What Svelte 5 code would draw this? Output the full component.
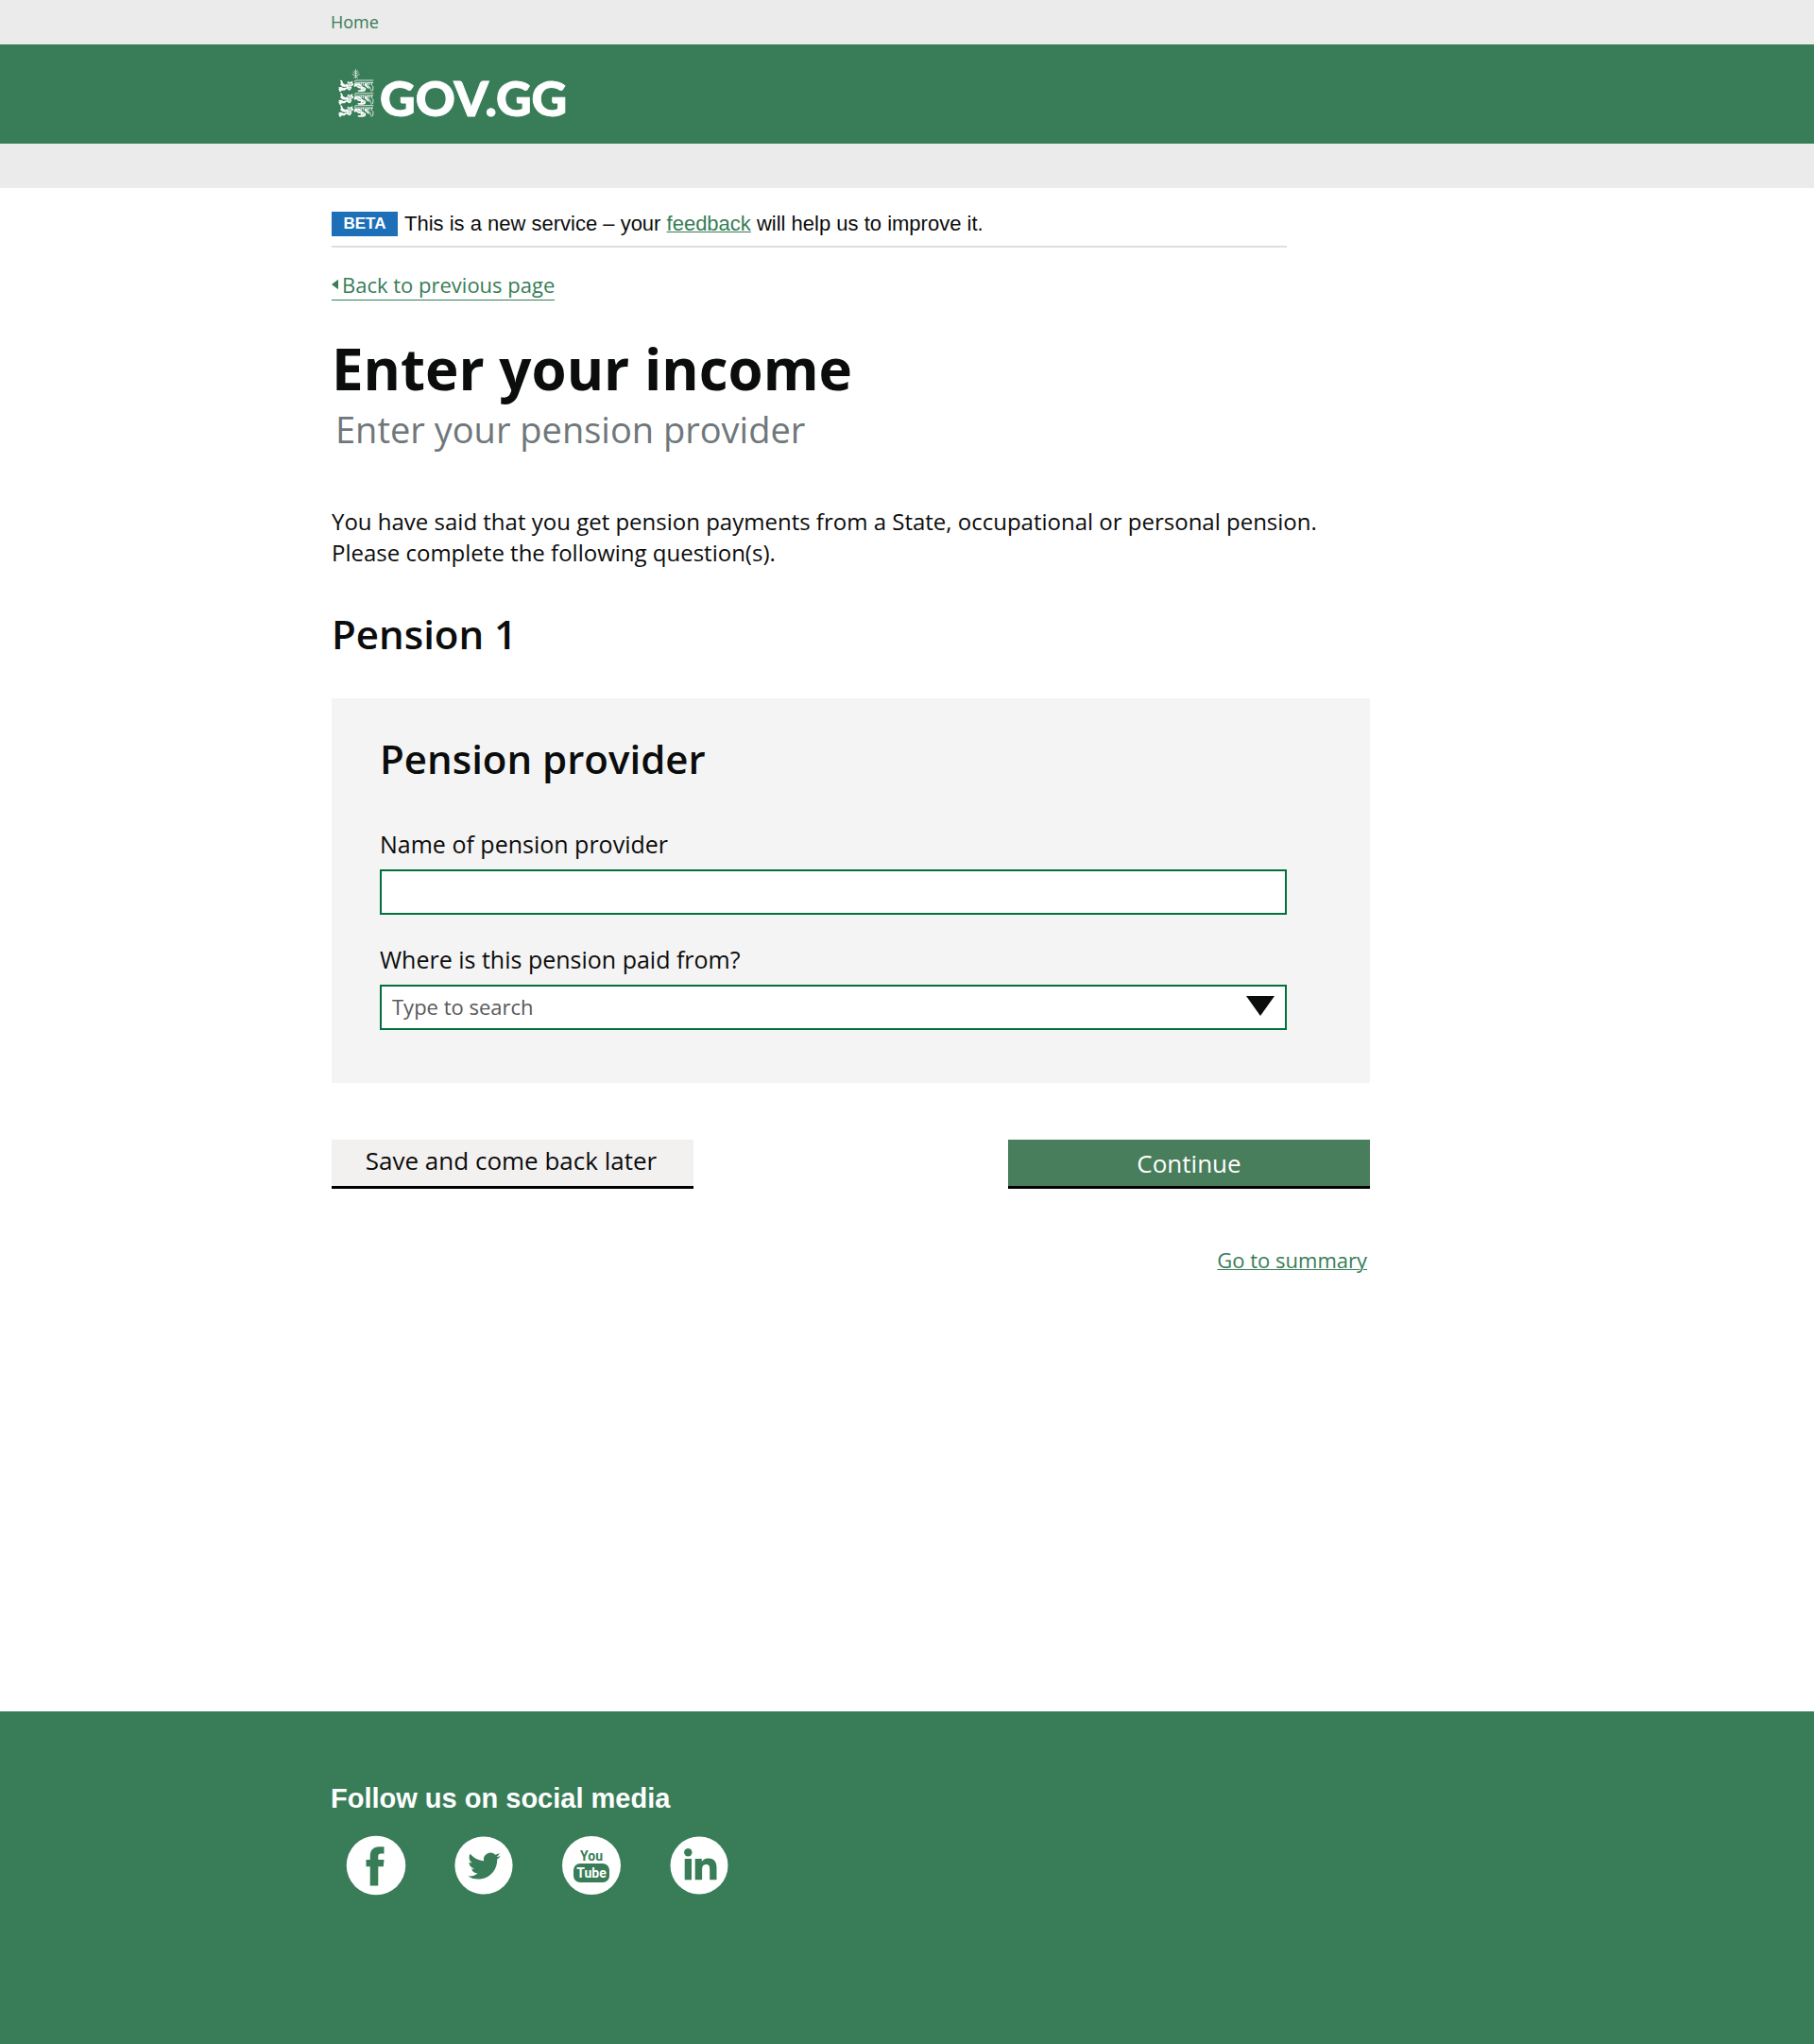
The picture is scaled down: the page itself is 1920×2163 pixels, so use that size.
<script>
  let provider = $state('');
  let country = $state('');
  const lionRows = [34, 75, 114];
</script>

<div class="page">
  <nav class="topbar" aria-label="Breadcrumb">
    <div class="container"><a href="#home">Home</a></div>
  </nav>

  <header class="masthead">
    <div class="container">
      <a class="brand" href="#home" aria-label="GOV.GG">
        <svg class="crest" viewBox="0 0 114 153" aria-hidden="true">
          <g fill="none" stroke="#fff" stroke-width="2" stroke-linecap="round">
            <path d="M56 1v28M56 10l-5-4M56 10l5-4M56 16l-8-6M56 16l8-6M56 22l-11-5M56 22l11-5M50 28l6-5 6 5" />
          </g>
          {#each lionRows as y}
            <g transform="translate(0 {y})">
              <path fill="#fff" d="M6 1l6 1 3 9 8 5 6-4 0 5-6 6-10-1-7-7 3-4zM1 24l8-1 8 4 10-3 1 4-8 6-9 0-3 4-6-1 2-4-5-2 4-2zM30 5l7 3 9-4-1 6 4 4-3 5-5 1 2 6-5 7-5 1-4-5-3 0 2-4-3-4 4-5 3-2-3-4z" />
              <path fill="none" stroke="#387d57" stroke-width="1.3" d="M31 11l12 2M30 16l14 1M31 21l9 1M32 27l7 0" />
              <path fill="none" stroke="#fff" stroke-width="2.4" stroke-linejoin="round" d="M112 2H55l-3 4 3 3h55l-3 0-1 8 5 5-1 12-6 3M56 9l-5 5M74 9v12l7 5M80 9v10M95 9l-2 9 9 7 1 9M100 9l-1 8" />
              <path fill="#fff" d="M54 12l16 0 3 9 7 2 8 4-2 9-8 2-14 0-3-4 10-1 1-5-9-2-5-5-7 2-1-5zM84 12l8 0-1 7 7 5-1 6-9-8-4-3z" />
              <path fill="none" stroke="#387d57" stroke-width="1.500" d="M60 17l12 6M74 33l9-5" />
            </g>
          {/each}
        </svg>
        <span class="wordmark">GOV.GG</span>
      </a>
    </div>
  </header>
  <div class="subbar"></div>

  <main class="container">
    <div class="column">
      <div class="phase">
        <strong class="tag">BETA</strong>
        <span>This is a new service – your <a href="#feedback">feedback</a> will help us to improve it.</span>
      </div>

      <a class="back" href="#previous">
        <svg viewBox="0 0 8 12" aria-hidden="true"><path d="M8 0v12L0 6z" fill="currentColor" /></svg>Back to previous page
      </a>

      <h1>Enter your income</h1>
      <p class="caption">Enter your pension provider</p>

      <p class="intro">
        You have said that you get pension payments from a State, occupational or personal pension. Please complete the
        following question(s).
      </p>

      <h2>Pension 1</h2>

      <form onsubmit={(e) => e.preventDefault()}>
        <section class="panel">
          <h2>Pension provider</h2>
          <label for="provider">Name of pension provider</label>
          <div class="field"><input id="provider" type="text" bind:value={provider} /></div>
          <label for="country">Where is this pension paid from?</label>
          <div class="field">
            <input id="country" type="text" placeholder="Type to search" bind:value={country} />
            <button class="toggle" type="button" aria-label="Show options">
              <svg viewBox="0 0 30 21" aria-hidden="true"><path d="M0 0h30L15 21z" fill="#0b0c0c" /></svg>
            </button>
          </div>
        </section>

        <div class="actions">
          <button class="btn secondary" type="button">Save and come back later</button>
          <button class="btn primary" type="submit">Continue</button>
        </div>
      </form>

      <div class="summary"><a href="#summary">Go to summary</a></div>
    </div>
  </main>

  <footer>
    <div class="container">
      <h3>Follow us on social media</h3>
      <ul>
        <li>
          <a href="#facebook" aria-label="Facebook">
            <svg viewBox="0 0 64 64"><circle cx="32" cy="32" r="31.300" fill="#fff" />
              <path fill="#387d57" d="M25.700 53.500V33.300H21.500V26H25.700V22.500C25.700 16 29 12.300 35.300 12.300H40.500V19.500H37.300C35 19.500 34.300 20.600 34.300 22.800V26H40.500L39.800 33.300H34.300V53.500Z" />
            </svg>
          </a>
        </li>
        <li>
          <a href="#twitter" aria-label="Twitter">
            <svg viewBox="0 0 64 64"><circle cx="32" cy="32" r="30.600" fill="#fff" />
              <path fill="#387d57" transform="translate(15.200 15.300) scale(1.440)" d="M23.950 4.570a10 10 0 0 1-2.820.780 4.960 4.960 0 0 0 2.160-2.730c-.950.560-2 .960-3.130 1.190a4.920 4.920 0 0 0-8.380 4.480C7.690 8.100 4.070 6.130 1.640 3.160a4.820 4.820 0 0 0-.670 2.480c0 1.710.870 3.210 2.190 4.100a4.900 4.900 0 0 1-2.230-.620v.060a4.920 4.920 0 0 0 3.950 4.830 5 5 0 0 1-2.210.080 4.940 4.940 0 0 0 4.600 3.420A9.870 9.870 0 0 1 0 19.540a14 14 0 0 0 7.550 2.210c9.050 0 14-7.500 14-13.980 0-.210 0-.420-.020-.630a9.940 9.940 0 0 0 2.460-2.550z" />
            </svg>
          </a>
        </li>
        <li>
          <a href="#youtube" aria-label="YouTube">
            <svg viewBox="0 0 64 64"><circle cx="32" cy="32" r="31" fill="#fff" />
              <rect x="13" y="30" width="38" height="20" rx="7" fill="#387d57" />
              <text x="32" y="27" class="yt" fill="#387d57">You</text>
              <text x="32" y="45" class="yt" fill="#fff">Tube</text>
            </svg>
          </a>
        </li>
        <li>
          <a href="#linkedin" aria-label="LinkedIn">
            <svg viewBox="0 0 64 64"><circle cx="32" cy="32" r="30.500" fill="#fff" />
              <g fill="#387d57"><circle cx="20.300" cy="18.300" r="4.200" /><rect x="16.700" y="25" width="7.300" height="22.300" />
                <path d="M27.700 25H34.800V28C36 25.900 38.300 24.400 41.500 24.400C48.600 24.400 50.500 28.800 50.500 35V47.300H43.200V36.300C43.200 33 42.700 30.900 39.600 30.900C36.200 30.900 35.100 33.100 35.100 36.300V47.300H27.700Z" /></g>
            </svg>
          </a>
        </li>
      </ul>
    </div>
  </footer>
</div>

<style>
  :global(body) {
    background: #fff;
  }
  .page {
    display: flex;
    flex-direction: column;
    min-height: 100vh;
    font-family: 'Open Sans', sans-serif;
    color: #0b0c0c;
  }
  .container {
    box-sizing: border-box;
    width: 100%;
    max-width: 1218px;
    margin: 0 auto;
  }
  .topbar .container,
  footer .container {
    max-width: 1220px;
  }
  .column {
    max-width: 1099px;
  }
  a {
    color: #387d57;
    text-decoration-thickness: 1px;
  }
  h1,
  h2,
  h3,
  p,
  ul {
    margin: 0;
    padding: 0;
  }
  .topbar,
  .subbar {
    height: 47px;
    background: #ebebeb;
    font-size: 18px;
    line-height: 47px;
  }
  .topbar a {
    text-decoration: none;
  }
  .masthead {
    display: flex;
    height: 105px;
    background: #387d57;
  }
  .brand {
    box-sizing: border-box;
    display: inline-flex;
    align-items: center;
    gap: 6px;
    height: 105px;
    padding: 6px 0 0 7px;
    color: #fff;
    text-decoration: none;
  }
  .crest {
    width: 38px;
    height: 51px;
    margin-bottom: 8px;
  }
  .wordmark {
    font: 900 52px/60px Lato, sans-serif;
    -webkit-text-stroke: 1px #fff;
  }
  main {
    flex: 1;
    padding: 25px 0 60px;
  }
  .phase {
    display: flex;
    gap: 7px;
    max-width: 1011px;
    padding-bottom: 10px;
    border-bottom: 2px solid #dedede;
    font: 22px/26px 'Liberation Sans', sans-serif;
  }
  .tag {
    box-sizing: border-box;
    width: 70px;
    background: #1d70b8;
    color: #fff;
    font-size: 17px;
    text-align: center;
  }
  .back {
    display: inline-flex;
    align-items: center;
    gap: 4px;
    margin-top: 24px;
    padding-bottom: 1px;
    border-bottom: 1px solid #387d57;
    font-size: 22px;
    line-height: 30px;
    text-decoration: none;
  }
  .back svg {
    width: 7px;
    height: 12px;
  }
  h1 {
    margin-top: 40px;
    font-size: 60px;
    line-height: 64px;
  }
  .caption {
    padding-left: 4px;
    color: #6f777b;
    font-size: 38px;
    line-height: 64px;
  }
  .intro {
    margin: 49px 0 46px;
    font-size: 24px;
    line-height: 33px;
  }
  h2 {
    font-size: 42px;
    font-weight: 600;
    line-height: 48px;
  }
  .panel {
    margin-top: 44px;
    padding: 40px 88px 56px 51px;
    background: #f4f4f4;
  }
  .panel h2 {
    margin-bottom: 50px;
  }
  label {
    display: block;
    margin-bottom: 11px;
    font-size: 25px;
    line-height: 32px;
  }
  .field {
    box-sizing: border-box;
    display: flex;
    align-items: center;
    height: 48px;
    border: 2px solid #00703c;
    background: #fff;
  }
  .field + label {
    margin-top: 31px;
  }
  input {
    flex: 1;
    min-width: 0;
    height: 100%;
    box-sizing: border-box;
    padding: 0 11px 3px;
    border: 0;
    background: transparent;
    font: 22px/30px 'Open Sans', sans-serif;
    color: #0b0c0c;
  }
  input::placeholder {
    color: #595959;
    opacity: 1;
  }
  .toggle {
    display: flex;
    padding: 0 11px 3px 0;
    border: 0;
    background: none;
  }
  .toggle svg {
    width: 30px;
    height: 21px;
  }
  .actions {
    display: flex;
    flex-wrap: wrap;
    justify-content: space-between;
    gap: 20px;
    margin-top: 60px;
  }
  .btn {
    box-sizing: border-box;
    width: 383px;
    height: 52px;
    padding: 0;
    border: 0;
    border-bottom: 3px solid #000;
    font: 26px/32px 'Open Sans', sans-serif;
  }
  .secondary {
    padding-bottom: 5px;
    padding-right: 3px;
    background: #f3f1f0;
    color: #0b0c0c;
  }
  .primary {
    background: #487e5b;
    color: #fff;
  }
  .summary {
    margin-top: 60px;
    padding-right: 3px;
    font-size: 22px;
    line-height: 30px;
    text-align: right;
  }
  footer {
    box-sizing: border-box;
    min-height: 352px;
    padding: 74px 0;
    background: #387d57;
    color: #fff;
  }
  h3 {
    font: bold 29px/36px 'Liberation Sans', sans-serif;
  }
  ul {
    display: flex;
    flex-wrap: wrap;
    gap: 50px;
    margin-top: 21px;
    padding-left: 16px;
    list-style: none;
  }
  li a,
  li svg {
    display: block;
    width: 64px;
    height: 64px;
  }
  .yt {
    font: bold 14px Roboto, sans-serif;
    text-anchor: middle;
  }
</style>
